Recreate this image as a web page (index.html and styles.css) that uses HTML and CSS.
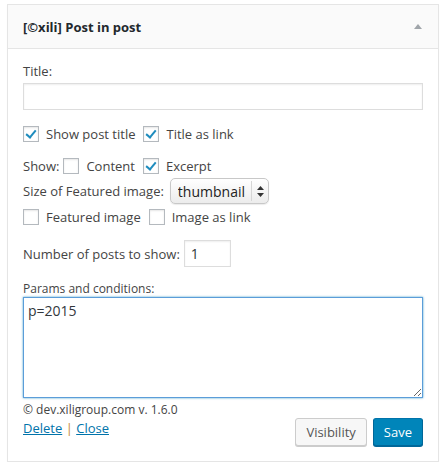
FILE: index.html
```html
<!DOCTYPE html>
<html lang="en">
<head>
    <meta charset="UTF-8">
    <title>Post in post widget</title>
    <link rel="stylesheet" href="styles.css">
</head>
<body>

    <div class="widget">
        <div class="widget-top">
            <h3 class="widget-title">[©xili] Post in post</h3>
            <span class="toggle-arrow"></span>
        </div>

        <form class="widget-inside">
            <label class="field-label" for="title">Title:</label>
            <input type="text" id="title" class="wide-input">

            <div class="row row-first">
                <label class="check"><input type="checkbox" checked> Show post title</label>
                <label class="check"><input type="checkbox" checked> Title as link</label>
            </div>

            <div class="row row-show">
                <span class="show-label">Show:</span>
                <label class="check"><input type="checkbox"> Content</label>
                <label class="check"><input type="checkbox" checked> Excerpt</label>
            </div>

            <div class="row row-size">
                <span>Size of Featured image:</span>
                <span class="select-wrap">
                    <select class="size-select">
                        <option>thumbnail</option>
                        <option>medium</option>
                        <option>large</option>
                        <option>full</option>
                    </select>
                    <span class="select-arrows">
                        <svg width="7" height="11" viewBox="0 0 7 11">
                            <path d="M3.5 0 L7 4 L0 4 Z" fill="#333"/>
                            <path d="M3.5 11 L7 7 L0 7 Z" fill="#333"/>
                        </svg>
                    </span>
                </span>
            </div>

            <div class="row row-image">
                <label class="check"><input type="checkbox"> Featured image</label>
                <label class="check"><input type="checkbox"> Image as link</label>
            </div>

            <div class="row row-number">
                <label for="number">Number of posts to show:</label>
                <input type="text" id="number" class="small-input" value="1">
            </div>

            <label class="params-label" for="params">Params and conditions:</label>
            <textarea id="params" class="params">p=2015</textarea>

            <div class="widget-footer">
                <div class="widget-meta">
                    <div class="credit">© dev.xiligroup.com v. 1.6.0</div>
                    <div class="control-links">
                        <a href="#">Delete</a> <span class="sep">|</span> <a href="#">Close</a>
                    </div>
                </div>
                <div class="buttons">
                    <button type="button" class="button">Visibility</button>
                    <button type="button" class="button button-primary">Save</button>
                </div>
            </div>
        </form>
    </div>

</body>
</html>
```

FILE: styles.css
```css
body {
    margin: 0;
    padding: 0;
    background-color: #ffffff;
    font-family: 'Open Sans', sans-serif;
    font-size: 13px;
    color: #444444;
}

/* Widget box */
.widget {
    width: 430px;
    margin: 4px 0 0 7px;
    border: 1px solid #e5e5e5;
    background-color: #ffffff;
    box-shadow: 0 1px 1px rgba(0, 0, 0, 0.04);
}

.widget-top {
    display: flex;
    align-items: center;
    justify-content: space-between;
    height: 43px;
    padding: 0 16px 0 15px;
    background-color: #fafafa;
    border-bottom: 1px solid #e5e5e5;
}

.widget-title {
    margin: 0;
    font-size: 13px;
    font-weight: 700;
    color: #23282d;
}

.toggle-arrow {
    width: 0;
    height: 0;
    border-left: 4px solid transparent;
    border-right: 4px solid transparent;
    border-bottom: 5px solid #a0a5aa;
    margin-top: -1px;
}

/* Form */
.widget-inside {
    padding: 13px 15px 15px 15px;
    margin: 0;
}

.field-label {
    display: block;
    line-height: 18px;
    margin-bottom: 3px;
}

input[type="text"],
textarea {
    font-family: 'Open Sans', sans-serif;
    border: 1px solid #dddddd;
    box-shadow: inset 0 1px 2px rgba(0, 0, 0, 0.07);
    background-color: #ffffff;
    color: #32373c;
    box-sizing: border-box;
    outline: none;
    margin: 0;
}

.wide-input {
    display: block;
    width: 100%;
    height: 27px;
}

.row {
    display: flex;
    align-items: center;
    line-height: 18px;
}

.row-first {
    margin-top: 15px;
}

.row-show {
    margin-top: 14px;
}

.row-size {
    margin-top: 3px;
}

.row-image {
    margin-top: 4px;
}

.row-number {
    margin-top: 14px;
}

.show-label {
    margin-right: 4px;
}

.check {
    display: inline-flex;
    align-items: center;
    gap: 7px;
    margin-right: 8px;
}

.check input {
    appearance: none;
    -webkit-appearance: none;
    position: relative;
    width: 16px;
    height: 16px;
    margin: 0;
    border: 1px solid #b4b9be;
    background-color: #ffffff;
    box-shadow: inset 0 1px 2px rgba(0, 0, 0, 0.1);
    box-sizing: border-box;
}

.check input:checked::before {
    content: "";
    position: absolute;
    left: 4px;
    top: 1px;
    width: 4px;
    height: 8px;
    border-right: 2px solid #1e8cbe;
    border-bottom: 2px solid #1e8cbe;
    transform: rotate(40deg);
}

/* Size select */
.select-wrap {
    position: relative;
    display: inline-block;
    margin-left: 6px;
}

.size-select {
    appearance: none;
    -webkit-appearance: none;
    width: 99px;
    height: 26px;
    padding: 0 0 0 7px;
    border: 1px solid #c8c8c8;
    border-radius: 5px;
    background: linear-gradient(#ffffff, #ececec);
    box-shadow: 0 1px 1px rgba(0, 0, 0, 0.08);
    font-family: 'Open Sans', sans-serif;
    font-size: 14px;
    color: #222222;
    outline: none;
    display: block;
}

.select-arrows {
    position: absolute;
    top: 3px;
    right: 0;
    bottom: 3px;
    width: 17px;
    border-left: 1px solid #d6d6d6;
    display: flex;
    align-items: center;
    justify-content: center;
    pointer-events: none;
}

.small-input {
    width: 47px;
    height: 27px;
    margin-left: 4px !important;
    padding: 0 6px;
    font-size: 14px;
}

/* Params */
.params-label {
    display: block;
    font-size: 12px;
    line-height: 16px;
    margin-top: 14px;
}

.params {
    display: block;
    width: 100%;
    height: 101px;
    padding: 3px 4px;
    font-size: 14px;
    line-height: 19px;
    border-color: #5b9dd9 !important;
    box-shadow: 0 0 2px rgba(30, 140, 190, 0.8) !important;
    resize: vertical;
}

/* Footer */
.widget-footer {
    display: flex;
    justify-content: space-between;
    align-items: flex-start;
    margin-top: 3px;
}

.credit {
    font-size: 12px;
    line-height: 18px;
}

.control-links {
    line-height: 18px;
}

.control-links a {
    color: #0073aa;
    text-decoration: underline;
}

.sep {
    color: #c6892f;
}

.buttons {
    display: flex;
    gap: 6px;
    margin-top: 17px;
}

.button {
    height: 28px;
    padding: 0 10px 1px;
    font-family: 'Open Sans', sans-serif;
    font-size: 13px;
    color: #555555;
    background-color: #f7f7f7;
    border: 1px solid #cccccc;
    border-radius: 3px;
    box-shadow: 0 1px 0 #cccccc;
    cursor: pointer;
}

.button-primary {
    color: #ffffff;
    background-color: #0085ba;
    border-color: #0073aa #006799 #006799;
    box-shadow: 0 1px 0 #006799;
}
```
